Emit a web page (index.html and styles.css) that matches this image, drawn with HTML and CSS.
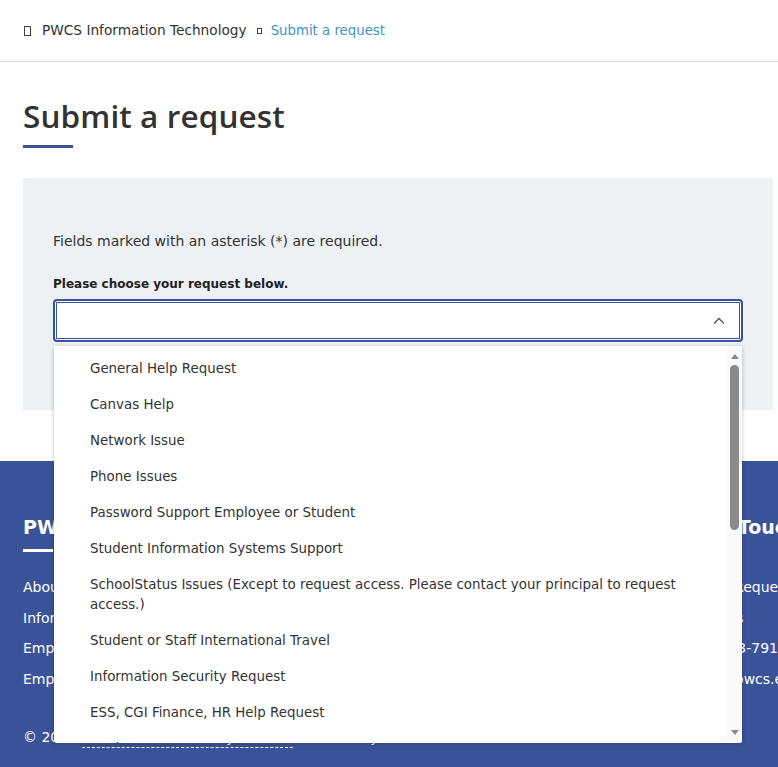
FILE: index.html
```html
<!DOCTYPE html>
<html lang="en">
<head>
<meta charset="utf-8">
<title>Submit a request</title>
<link rel="stylesheet" href="styles.css">
</head>
<body>
<header class="topbar">
  <nav class="crumbs">
    <span class="tofu tofu-lg"></span>
    <a class="crumb" href="#">PWCS Information Technology</a>
    <span class="tofu tofu-sm"></span>
    <a class="crumb crumb-current" href="#">Submit a request</a>
  </nav>
</header>

<main class="page">
  <h1 class="title">Submit a request</h1>
  <div class="title-bar"></div>

  <section class="form-box">
    <p class="note">Fields marked with an asterisk (*) are required.</p>
    <label class="label">Please choose your request below.</label>
    <div class="select-wrap">
      <div class="select">
        <svg class="chev" width="12" height="8" viewBox="0 0 12 8"><path d="M1 6.5 L6 1.5 L11 6.5" fill="none" stroke="#555" stroke-width="1.4"/></svg>
      </div>
      <div class="dropdown">
        <ul class="options">
          <li>General Help Request</li>
          <li>Canvas Help</li>
          <li>Network Issue</li>
          <li>Phone Issues</li>
          <li>Password Support Employee or Student</li>
          <li>Student Information Systems Support</li>
          <li>SchoolStatus Issues (Except to request access. Please contact your principal to request access.)</li>
          <li>Student or Staff International Travel</li>
          <li>Information Security Request</li>
          <li>ESS, CGI Finance, HR Help Request</li>
          <li>Equipment Request</li>
        </ul>
        <div class="scrollbar">
          <span class="arrow arrow-up"></span>
          <span class="thumb"></span>
          <span class="arrow arrow-down"></span>
        </div>
      </div>
    </div>
  </section>
</main>

<footer class="footer">
  <div class="footer-cols">
    <div class="fcol">
      <h2 class="ftitle">PWCS IT</h2>
      <div class="fbar"></div>
      <ul class="flinks">
        <li>About Us</li>
        <li>Information Technology</li>
        <li>Employee Resources</li>
        <li>Employee Self Service</li>
      </ul>
    </div>
    <div class="fcol fcol-mid"></div>
    <div class="fcol fcol-right">
      <h2 class="ftitle">Get in Touch</h2>
      <div class="fbar fbar-hidden"></div>
      <ul class="flinks">
        <li>Submit a Request</li>
        <li>Contact Us</li>
        <li>Phone: 703-791-7200</li>
        <li>support@pwcs.edu</li>
      </ul>
    </div>
  </div>
  <div class="fbottom">
    <span>© 2024</span> <a class="flink-dash" href="#">Prince William County Schools</a> <span>Powered by Zendesk</span>
  </div>
</footer>
</body>
</html>
```
FILE: styles.css
```css
* { box-sizing: border-box; }
html, body { margin: 0; padding: 0; }
body {
  font-family: "DejaVu Sans", sans-serif;
  color: #333;
  background: #fff;
  overflow-x: hidden;
  width: 778px;
}
a { text-decoration: none; color: inherit; }
ul { list-style: none; margin: 0; padding: 0; }

.topbar {
  height: 62px;
  border-bottom: 1px solid #dcdcdc;
  display: flex;
  align-items: center;
  padding-left: 24px;
}
.crumbs {
  display: flex;
  align-items: center;
  font-size: 13.7px;
  color: #333;
  padding-bottom: 1px;
}
.tofu { display: inline-block; border: 1px solid #444; }
.tofu-lg { width: 7px; height: 10px; margin-right: 11px; margin-top: 2px; }
.tofu-sm { width: 5px; height: 6px; margin: 1px 9px 0 10px; }
.crumb-current { color: #3d93c7; font-size: 13.3px; }

.page { padding: 0 5px 0 23px; }
.title {
  font-family: "Open Sans", sans-serif;
  font-weight: 600;
  font-size: 31.5px;
  color: #333;
  margin: 0;
  padding-top: 31px;
  line-height: 46px;
  letter-spacing: 0.1px;
}
.title-bar {
  width: 50px;
  height: 3px;
  background: #3a539b;
  margin-top: 6px;
}
.form-box {
  margin-top: 30px;
  background: #edf1f4;
  padding: 53px 30px 69px 30px;
  height: 232px;
}
.note {
  margin: 0;
  font-size: 14px;
  line-height: 20px;
  color: #333;
}
.label {
  display: block;
  margin-top: 23px;
  font-size: 12px;
  font-weight: bold;
  line-height: 20px;
  color: #222;
}
.select-wrap { position: relative; margin-top: 5px; }
.select {
  height: 43px;
  background: #fff;
  border: 2px solid #3a539b;
  border-radius: 4px;
  box-shadow: inset 0 0 0 1px #fff, inset 0 0 0 2px #3a539b;
  display: flex;
  align-items: center;
  justify-content: flex-end;
  padding-right: 16px;
}
.chev { display: block; }

.dropdown {
  position: absolute;
  left: 1px;
  top: 47px;
  width: 688px;
  height: 397px;
  background: #fff;
  box-shadow: 0 1px 4px rgba(0,0,0,0.25);
  border-radius: 0 0 3px 3px;
  overflow: hidden;
  display: flex;
  z-index: 10;
}
.options {
  flex: 1;
  padding-top: 5px;
}
.options li {
  font-size: 13.4px;
  line-height: 20px;
  padding: 8px 36px;
  color: #333;
}
.scrollbar {
  width: 15px;
  background: #fafafa;
  display: flex;
  flex-direction: column;
  align-items: center;
  padding-top: 8px;
}
.arrow { width: 0; height: 0; border-left: 4px solid transparent; border-right: 4px solid transparent; }
.arrow-up { border-bottom: 5px solid #8a8a8a; }
.arrow-down { border-top: 5px solid #8a8a8a; margin-top: auto; margin-bottom: 8px; }
.thumb {
  width: 9px;
  height: 165px;
  background: #8a8a8a;
  border-radius: 5px;
  margin-top: 6px;
}

.footer {
  margin-top: 51px;
  background: #3a5398;
  color: #fff;
  height: 306px;
  overflow: hidden;
  padding: 0 0 0 23px;
}
.footer-cols {
  display: grid;
  grid-template-columns: 300px 344px 220px;
  padding-top: 53px;
}
.ftitle {
  margin: 0;
  font-size: 19px;
  font-weight: bold;
  line-height: 26px;
}
.fbar { width: 30px; height: 3px; background: #fff; margin-top: 9px; }
.fbar-hidden { background: transparent; }
.flinks { margin-top: 20px; }
.flinks li {
  font-size: 14px;
  line-height: 30.5px;
}
.fbottom {
  margin-top: 33px;
  font-size: 14px;
  line-height: 20px;
}
.flink-dash { border-bottom: 1px dashed #fff; padding-bottom: 2px; }
```
